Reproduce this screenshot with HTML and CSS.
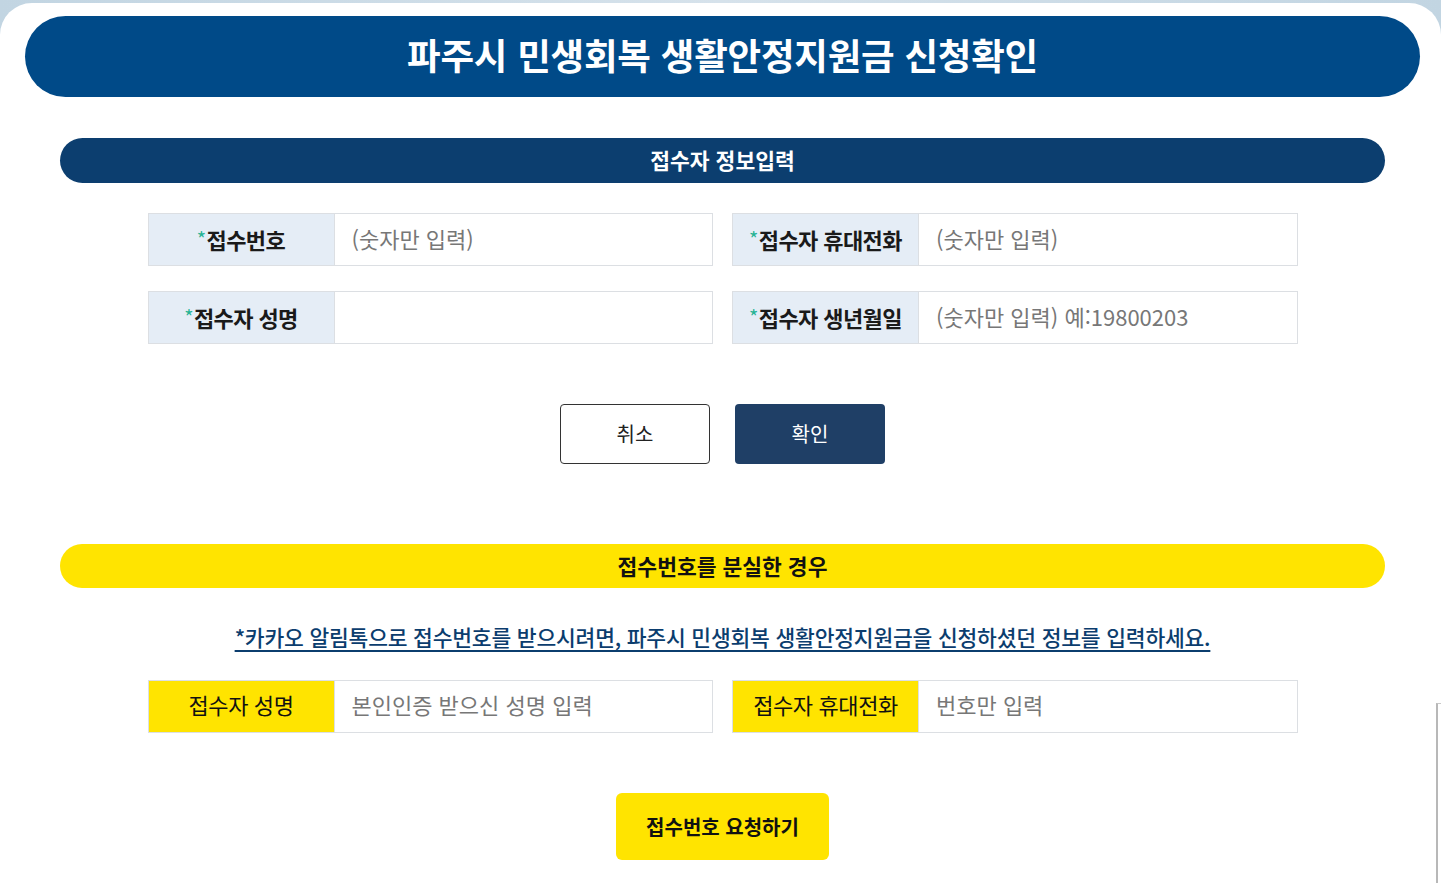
FILE: index.html
```html
<!DOCTYPE html>
<html lang="ko">
<head>
    <meta charset="UTF-8">
    <meta name="viewport" content="width=device-width, initial-scale=1.0">
    <title>파주시 민생회복 생활안정지원금 신청확인</title>
    <link rel="stylesheet" href="styles.css">
</head>
<body>
    <div class="card">
        <h1 class="page-title">파주시 민생회복 생활안정지원금 신청확인</h1>

        <div class="section">
            <h2 class="section-bar">접수자 정보입력</h2>
            <div class="form-grid">
                <div class="field">
                    <label class="field-label"><span class="req">*</span>접수번호</label>
                    <input class="field-input" type="text" placeholder="(숫자만 입력)">
                </div>
                <div class="field">
                    <label class="field-label"><span class="req">*</span>접수자 휴대전화</label>
                    <input class="field-input" type="text" placeholder="(숫자만 입력)">
                </div>
                <div class="field">
                    <label class="field-label"><span class="req">*</span>접수자 성명</label>
                    <input class="field-input" type="text">
                </div>
                <div class="field">
                    <label class="field-label"><span class="req">*</span>접수자 생년월일</label>
                    <input class="field-input" type="text" placeholder="(숫자만 입력) 예:19800203">
                </div>
            </div>
            <div class="actions">
                <button class="btn btn-cancel">취소</button>
                <button class="btn btn-ok">확인</button>
            </div>
        </div>

        <div class="section lost">
            <h2 class="section-bar yellow">접수번호를 분실한 경우</h2>
            <p class="notice">*카카오 알림톡으로 접수번호를 받으시려면, 파주시 민생회복 생활안정지원금을 신청하셨던 정보를 입력하세요.</p>
            <div class="form-grid">
                <div class="field">
                    <label class="field-label yellow-label">접수자 성명</label>
                    <input class="field-input big" type="text" placeholder="본인인증 받으신 성명 입력">
                </div>
                <div class="field">
                    <label class="field-label yellow-label">접수자 휴대전화</label>
                    <input class="field-input big" type="text" placeholder="번호만 입력">
                </div>
            </div>
            <div class="actions">
                <button class="btn btn-request">접수번호 요청하기</button>
            </div>
        </div>
    </div>
    <div class="edge-line"></div>
</body>
</html>
```

FILE: styles.css
```css
*{box-sizing:border-box}
html,body{margin:0;padding:0}
body{font-family:"Noto Sans CJK KR","Noto Sans",sans-serif;background:linear-gradient(90deg,#c2d5e2,#d6e2eb 50%,#c2d5e2);overflow:hidden;height:883px}
.card{margin-top:3px;background:#fff;border-radius:32px 32px 0 0;padding:13px 21px 40px 25px;min-height:880px}
.page-title{margin:0;height:81px;padding-bottom:4px;border-radius:41px;background:#004a88;color:#fff;font-size:36.5px;font-weight:700;display:flex;align-items:center;justify-content:center;letter-spacing:-0.2px}
.section{margin:41px 35px 0 35px}
.section-bar{margin:0;height:45px;padding-bottom:2px;border-radius:23px;background:#0c3e6f;color:#fff;font-size:21.5px;font-weight:700;display:flex;align-items:center;justify-content:center}
.section-bar.yellow{background:#ffe400;color:#111;height:44px}
.form-grid{width:1150px;margin:30px auto 0;display:grid;grid-template-columns:1fr 1fr;column-gap:19px;row-gap:25px}
.field{display:flex;height:53px;border:1px solid #dcdfe3;background:#fff}
.field-label{width:186px;flex:none;padding-bottom:2px;background:#e5edf6;border-right:1px solid #dcdfe3;display:flex;align-items:center;justify-content:center;font-size:22px;font-weight:700;color:#1a1a1a;letter-spacing:-0.6px}
.req{color:#27b394;font-weight:400;font-size:20px;align-self:flex-start;margin-top:10px;margin-right:1px}
.field-input{flex:1;border:none;outline:none;padding:0 17px 3px;font-family:inherit;font-size:22px;color:#333;background:transparent}
.field-input::placeholder{color:#777}
.field-input.big{padding-bottom:5px}
.actions{display:flex;justify-content:center;gap:25px;margin-top:60px}
.btn{width:150px;height:60px;padding-bottom:2px;border-radius:4px;font-family:inherit;font-size:20px;cursor:pointer}
.btn-cancel{background:#fff;border:1px solid #333;color:#222}
.btn-ok{background:#1f3f66;border:none;color:#fff}
.lost{margin-top:80px}
.notice{margin:33px 0 0;text-align:center;font-size:21.5px;font-weight:500;color:#0b3d6e;text-decoration:underline;text-underline-offset:4px;letter-spacing:-0.2px}
.lost .form-grid{margin-top:28px}
.yellow-label{padding-bottom:5px;background:#ffe400;font-weight:400;color:#111;font-size:22px;letter-spacing:-0.4px}
.lost .actions{margin-top:60px}
.btn-request{width:213px;height:67px;border:none;border-radius:6px;background:#ffe400;color:#111;font-weight:700;font-size:20px}
.edge-line{position:absolute;left:1436px;top:703px;width:10px;height:200px;border-left:2px solid #b8b8b8;border-top:1px solid #c8c8c8}
```
